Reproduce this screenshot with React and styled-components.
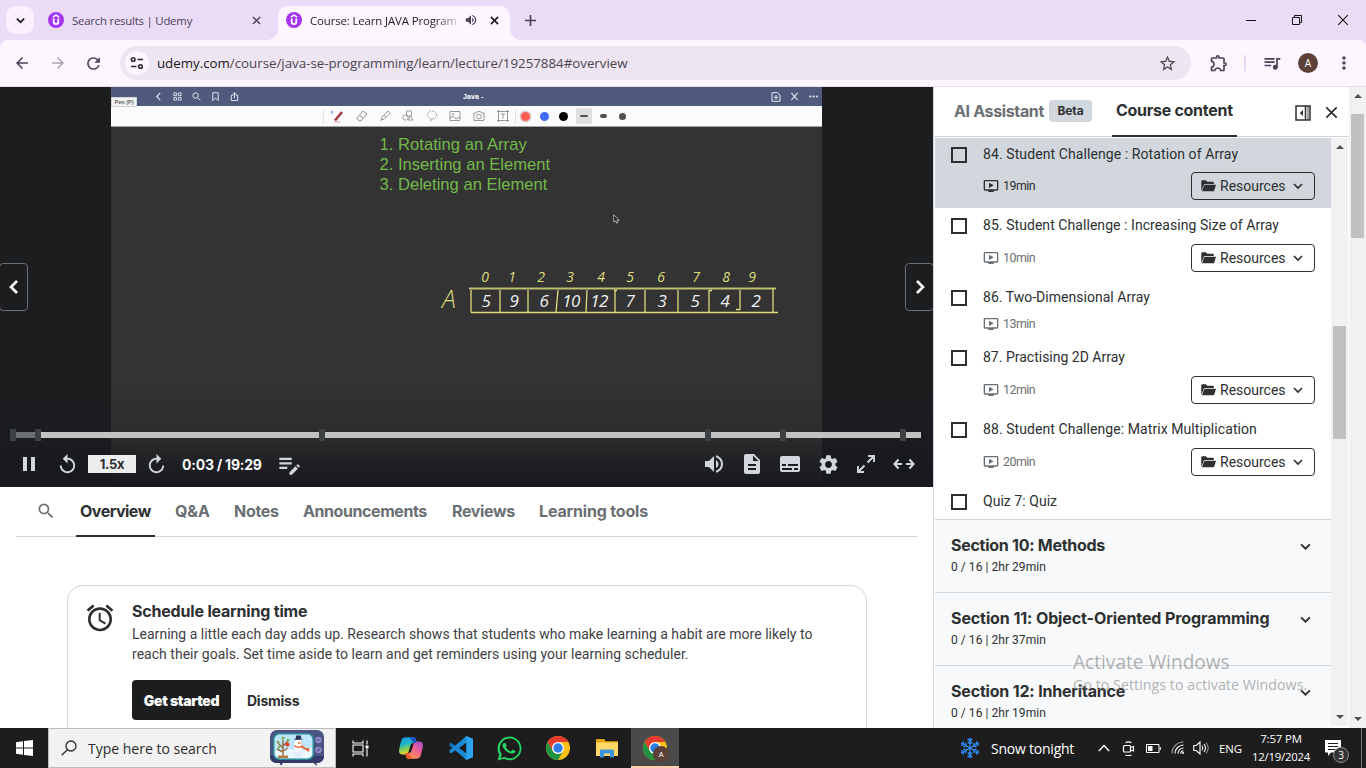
import React from "react";
import styled, { createGlobalStyle } from "styled-components";
import {
  MdAlarm, MdArrowBack, MdArrowForward, MdDescription, MdEditNote, MdMoreVert, MdOndemandVideo,
  MdOutlineExtension, MdPause, MdQueueMusic, MdRefresh, MdReplay, MdSearch, MdSettings, MdStarBorder,
  MdSubtitles, MdVolumeUp,
} from "react-icons/md";

const ui = `"Open Sans", "Liberation Sans", sans-serif`;
const brand = `Inter, "Liberation Sans", sans-serif`;
const body = `Roboto, "Liberation Sans", sans-serif`;
const ink = "#2d2f31";

const GlobalStyle = createGlobalStyle`
  * { box-sizing: border-box; }
  body { margin: 0; background: #fff; overflow: hidden; }
  svg { display: block; flex: none; }
  button { font: inherit; color: inherit; background: none; border: 0; padding: 0; }
  p, h2, h3, ul { margin: 0; padding: 0; font-size: inherit; font-weight: inherit; }
`;

const Screen = styled.div`
  position: relative;
  width: 1366px;
  height: 768px;
  display: flex;
  flex-direction: column;
  overflow: hidden;
  font-family: ${body};
  color: ${ink};
`;

/* A run of text with its own tracking */
const Run = styled.span`
  white-space: nowrap;
  letter-spacing: ${(p) => p.$ls || 0}px;
`;

/* ---------- Browser ---------- */
const TabStrip = styled.header`
  height: 40px;
  flex: none;
  display: flex;
  background: #eadcf7;
  font: 400 11.4px ${ui};
  color: #4b4158;
`;
const TabSearch = styled.button`
  width: 28px;
  height: 28px;
  margin: 6px 6px 0 6px;
  border-radius: 10px;
  background: #f9efff;
  display: grid;
  place-items: center;
  color: #1f1a24;
`;
const BrowserTab = styled.div`
  position: relative;
  height: 34px;
  margin: 6px ${(p) => (p.$active ? 0 : 6)}px 0 0;
  width: 232px;
  padding: 0 8px 6px;
  border-radius: 10px 10px 0 0;
  display: flex;
  align-items: center;
  gap: 8px;
  background: ${(p) => (p.$active ? "#fdf6ff" : "transparent")};
  color: ${(p) => (p.$active ? "#1f1a24" : "#4b4158")};
  ${(p) => p.$active && `
    &::before, &::after {
      content: ""; position: absolute; bottom: 0; width: 10px; height: 10px;
    }
    &::before { left: -10px; background: radial-gradient(circle at 0 0, transparent 9.5px, #fdf6ff 10px); }
    &::after { right: -10px; background: radial-gradient(circle at 100% 0, transparent 9.5px, #fdf6ff 10px); }
  `}
`;
const TabTitle = styled.span`
  flex: 1;
  min-width: 0;
  white-space: nowrap;
  letter-spacing: ${(p) => (p.$fade ? -0.12 : -0.22)}px;
  ${(p) => p.$fade && "margin-right: -4px; mask-image: linear-gradient(90deg, #000 84%, rgba(0, 0, 0, 0.1));"}
`;
const TabClose = styled.button`
  width: 16px;
  display: grid;
  place-items: center;
`;
const NewTab = styled.button`
  width: 40px;
  display: grid;
  place-items: center;
`;
const WindowControls = styled.div`
  margin-left: auto;
  display: flex;
  color: #111;
`;
const WindowButton = styled.button`
  width: 46px;
  display: grid;
  place-items: center;
`;
const Toolbar = styled.div`
  height: 47px;
  flex: none;
  display: flex;
  align-items: center;
  padding: 0 4px;
  background: #fdf6ff;
  border-bottom: 1px solid #e6dcee;
  border-radius: 8px 8px 0 0;
  color: #4b4158;
`;
const ToolbarBack = styled.div`
  flex: none;
  background: #eadcf7;
`;
const ToolButton = styled.button`
  width: 36px;
  height: 34px;
  display: grid;
  place-items: center;
  opacity: ${(p) => (p.$dim ? 0.45 : 1)};
`;
const AddressBar = styled.div`
  width: 1072px;
  height: 34px;
  margin: 0 10px 0 8px;
  padding: 0 14px 0 5px;
  border-radius: 17px;
  background: #ede5f1;
  display: flex;
  align-items: center;
  gap: 8px;
  font: 400 13.3px ${ui};
  color: #4c4650;
  b { font-weight: 400; color: #1b1820; }
`;
const SiteInfo = styled.span`
  width: 24px;
  height: 24px;
  border-radius: 50%;
  background: #fdf6ff;
  display: grid;
  place-items: center;
  color: #2b2630;
`;
const Url = styled.span`
  flex: 1;
  white-space: nowrap;
`;
const ToolDivider = styled.i`
  width: 2px;
  height: 16px;
  margin: 0 8px 0 7px;
  background: #e6d8f8;
`;
const Avatar = styled.span`
  width: ${(p) => p.$size}px;
  height: ${(p) => p.$size}px;
  border-radius: 50%;
  background: #5d4037;
  color: #fff;
  display: grid;
  place-items: center;
  font: 400 ${(p) => p.$size * 0.5}px ${body};
`;

/* ---------- Page ---------- */
const Page = styled.main`
  height: 641px;
  flex: none;
  display: flex;
  overflow: hidden;
`;
const Lesson = styled.section`
  width: 933px;
  flex: none;
  overflow: hidden;
`;
const Player = styled.div`
  position: relative;
  height: 400px;
  display: flex;
  justify-content: center;
  background: #1c1d1f;
`;
const Slide = styled.div`
  position: relative;
  width: 711px;
  background: #333;
  display: flex;
  flex-direction: column;
`;
const SlideHeader = styled.div`
  height: 19px;
  flex: none;
  display: flex;
  align-items: center;
  background: #505a7d;
  color: #e3e6ef;
  padding-left: 38px;
`;
const SlideIcon = styled.span`
  width: ${(p) => p.$w || 19}px;
  display: grid;
  place-items: center;
`;
const SlideTitle = styled.span`
  margin: 0 auto 0 219px;
  font: 700 7px "Liberation Sans", sans-serif;
  color: #fff;
  letter-spacing: 0.1px;
`;
const PenTip = styled.span`
  position: absolute;
  left: 0;
  top: 10px;
  width: 26px;
  height: 10px;
  background: #f2f2f2;
  border: 1px solid #d4d4d4;
  font: 700 5.5px/8px "Liberation Sans", sans-serif;
  text-align: center;
  color: #666;
`;
const SlideTools = styled.div`
  height: 21px;
  flex: none;
  display: flex;
  align-items: center;
  padding-left: 212px;
  background: #fbfbfb;
  border-bottom: 1px solid #a5a5a5;
  color: #8b8b8b;
`;
const ToolSep = styled.i`
  width: 1px;
  height: 15px;
  background: #e2e2e2;
`;
const Swatch = styled.span`
  width: 9px;
  height: 9px;
  margin: 0 5px;
  border-radius: 50%;
  background: ${(p) => p.$c};
  box-shadow: ${(p) => (p.$on ? "0 0 0 1.5px #dccfcf" : "none")};
`;
const NibBox = styled.span`
  width: 16px;
  height: 16px;
  margin: 0 1.6px;
  border-radius: 2px;
  display: grid;
  place-items: center;
  background: ${(p) => (p.$on ? "#dedee0" : "none")};
  &::after {
    content: "";
    width: ${(p) => p.$w}px;
    height: ${(p) => p.$h}px;
    border-radius: 4px;
    background: #505050;
  }
`;
const Topics = styled.div`
  padding: 8px 0 0 268.5px;
  font: 400 16.6px/20px "Liberation Sans", sans-serif;
  color: #74b84a;
  display: flex;
  flex-direction: column;
`;
const Sketch = styled.svg`
  margin: 69px 0 0 319px;
  width: 360px;
  height: 60px;
`;
const Pointer = styled.svg`
  position: absolute;
  left: 502px;
  top: 127px;
`;
const Watermark = styled.span`
  position: absolute;
  right: 3px;
  bottom: 3px;
  font: 700 6px/9px ${brand};
  color: #4b4e52;
  display: flex;
  gap: 3px;
`;
const StepButton = styled.button`
  position: absolute;
  top: 176px;
  ${(p) => p.$side}: -1px;
  width: 29px;
  height: 48px;
  border: 1px solid #6a6f73;
  border-radius: 4px;
  background: #1c1d1f;
  color: #fff;
  display: grid;
  place-items: center;
`;
const Controls = styled.div`
  position: absolute;
  inset: auto 0 0 0;
  height: 100px;
  padding: 42px 12px 0 10px;
  background: linear-gradient(180deg, rgba(22, 24, 28, 0) 0%, rgba(24, 25, 30, 0.28) 50%, rgba(24, 25, 30, 0.72) 76%, rgba(23, 24, 29, 0.95) 100%);
`;
const Track = styled.div`
  height: 12px;
  display: flex;
  align-items: center;
`;
const TrackPart = styled.i`
  flex: ${(p) => p.$w} 0 0;
  height: 6px;
  background: ${(p) => (p.$played ? "#6a6f73" : "#c2c3c1")};
`;
const Marker = styled.i`
  width: 6px;
  height: 12px;
  flex: none;
  background: #3e4143;
`;
const ControlRow = styled.div`
  height: 36px;
  margin-top: 5px;
  display: flex;
  align-items: center;
  color: #d1d7dc;
`;
const Control = styled.button`
  width: 38px;
  height: 36px;
  display: grid;
  place-items: center;
  ${(p) => p.$flip && "transform: scaleX(-1);"}
`;
const Speed = styled.button`
  width: 48px;
  height: 18px;
  margin: 0 2px;
  background: #eceef0;
  color: ${ink};
  font: 700 13px/18px ${brand};
  letter-spacing: -0.35px;
`;
const Clock = styled.span`
  width: 88px;
  margin-left: 6px;
  font: 700 14px ${brand};
  letter-spacing: -0.22px;
  white-space: nowrap;
  color: #f7f9fa;
`;
const ControlsRight = styled.div`
  margin: 0 -2px 0 auto;
  display: flex;
`;

const TabBar = styled.nav`
  height: 50px;
  margin: 0 16px;
  padding-left: 12px;
  border-bottom: 1px solid #d1d7dc;
  display: flex;
  font: 700 16px ${brand};
  color: #6a6f73;
`;
const SearchTab = styled.span`
  width: 36px;
  padding-bottom: 1px;
  display: grid;
  place-items: center;
`;
const CourseTab = styled.span`
  width: ${(p) => p.$w}px;
  height: 50px;
  margin: 0 4px 0 12px;
  padding: 0 0 3px 4px;
  display: flex;
  align-items: center;
  color: ${(p) => (p.$active ? ink : "inherit")};
  box-shadow: ${(p) => (p.$active ? `inset 0 -2px 0 ${ink}` : "none")};
`;
const ScheduleCard = styled.article`
  margin: 48px 66px 0 67px;
  height: 170px;
  border: 1px solid #d1d7dc;
  border-radius: 16px;
  padding: 15px 0 0 16px;
  display: flex;
  gap: 16px;
  > svg { margin-top: 1px; }
`;
const CardBody = styled.div`
  font: 400 14px/20px ${body};
  color: #3f4144;
  display: flex;
  flex-direction: column;
`;
const CardTitle = styled.h2`
  font: 700 16px/20px ${brand};
  margin-bottom: 3px;
  color: ${ink};
`;
const CardActions = styled.div`
  margin-top: 16px;
  display: flex;
  align-items: center;
  gap: 16px;
  font: 700 14px ${brand};
  color: ${ink};
`;
const Primary = styled.button`
  width: 99px;
  height: 40px;
  border-radius: 4px;
  background: #1c1d1f;
  color: #fff;
  font-weight: 900;
`;

/* ---------- Sidebar ---------- */
const Sidebar = styled.aside`
  width: 416px;
  flex: none;
  border-left: 1px solid #d1d7dc;
  display: flex;
  flex-direction: column;
  background: #fff;
`;
const SideHeader = styled.div`
  height: 50px;
  flex: none;
  padding-left: 20px;
  border-bottom: 1px solid #d1d7dc;
  display: flex;
  align-items: center;
  font: 700 16px ${brand};
  color: #6a6f73;
`;
const Assistant = styled.span`
  width: 95px;
  padding-bottom: 2px;
`;
const Badge = styled.span`
  width: 43px;
  height: 22px;
  margin: 0 20px 2px 0;
  border-radius: 4px;
  background: #d1d7dc;
  color: ${ink};
  font-size: 12px;
  display: grid;
  place-items: center;
`;
const ActiveSideTab = styled.span`
  width: 125px;
  height: 50px;
  padding: 0 0 3px 4px;
  margin-right: 52px;
  display: flex;
  align-items: center;
  color: ${ink};
  box-shadow: inset 0 -2px 0 ${ink};
`;
const SideIcon = styled.button`
  width: 28px;
  padding-top: 2px;
  display: grid;
  place-items: center;
  color: ${ink};
`;
const SideMain = styled.div`
  display: flex;
  flex: 1;
  min-height: 0;
  padding: 1px 0 0 1px;
`;
const Curriculum = styled.div`
  width: 396px;
  height: 590px;
  overflow: hidden;
  flex: none;
`;
const Lecture = styled.li`
  height: ${(p) => p.$h}px;
  list-style: none;
  display: flex;
  padding: ${(p) => (p.$current ? 8 : 9)}px 16px 0;
  gap: 16px;
  background: ${(p) => (p.$current ? "#d1d7dc" : "#fff")};
`;
const Checkbox = styled.i`
  width: 16px;
  height: 16px;
  margin-top: 1px;
  flex: none;
  border: 2px solid ${ink};
`;
const LectureBody = styled.div`
  flex: 1;
  display: flex;
  flex-direction: column;
  font: 400 14px/16px ${body};
`;
const LectureMeta = styled.div`
  height: ${(p) => (p.$tall ? 28 : 16)}px;
  margin-top: ${(p) => (p.$current ? 10 : 11)}px;
  display: flex;
  align-items: center;
  justify-content: space-between;
  font-size: 12.4px;
  color: ${(p) => (p.$current ? ink : "#6a6f73")};
`;
const Duration = styled.span`
  display: flex;
  align-items: center;
  gap: 4px;
`;
const Resources = styled.button`
  width: 124px;
  height: 28px;
  padding: 0 11px 0 9px;
  border: 1px solid ${ink};
  border-radius: 4px;
  display: flex;
  align-items: center;
  font: 400 14px ${body};
  color: ${ink};
  span { margin: 0 auto 0 4px; }
`;
const Section = styled.div`
  height: 73px;
  padding: 15px 20px 0 16px;
  border-top: 1px solid #d1d7dc;
  background: #f7f9fa;
  display: flex;
  justify-content: space-between;
  font: 400 12px/16px ${body};
  svg { margin-top: 6px; }
`;
const SectionTitle = styled.h3`
  font: 700 16px/20px ${brand};
  margin-bottom: 4px;
`;
const Scrollbar = styled.div`
  width: 17px;
  height: ${(p) => p.$h}px;
  flex: none;
  background: #f1f1f1;
  display: flex;
  flex-direction: column;
  align-items: center;
  justify-content: space-between;
  padding: 6px 0;
`;
const Thumb = styled.i`
  width: 13px;
  height: ${(p) => p.$h}px;
  margin: ${(p) => p.$top}px 0 auto;
  background: #c1c1c1;
`;
const Activate = styled.div`
  position: absolute;
  left: 1073px;
  top: 650px;
  display: flex;
  flex-direction: column;
  color: rgba(130, 130, 130, 0.62);
  font: 400 14.3px/20px ${ui};
  h3 { font: 400 19.1px/25px ${ui}; }
`;

/* ---------- Taskbar ---------- */
const Taskbar = styled.footer`
  height: 40px;
  flex: none;
  display: flex;
  align-items: center;
  background: #1d1d1d;
  color: #fff;
  font: 400 11.4px ${ui};
`;
const TaskSlot = styled.button`
  position: relative;
  width: ${(p) => p.$w || 49}px;
  height: 40px;
  display: grid;
  place-items: center;
  background: ${(p) => (p.$active ? "#4a4a4a" : "none")};
  box-shadow: ${(p) => (p.$active ? "inset 0 -2px 0 #ffcfae" : "none")};
`;
const ProfileDot = styled.span`
  position: absolute;
  left: 22px;
  top: 18px;
`;
const SearchBox = styled.div`
  width: 288px;
  height: 40px;
  padding: 0 11px 0 12px;
  border: 1px solid #bcbcbc;
  background: #f2f2f2;
  color: #2b2b2b;
  display: flex;
  align-items: center;
  gap: 11px;
  font-size: 14px;
  span { flex: 1; }
`;
const Tray = styled.div`
  margin-left: auto;
  display: flex;
  align-items: center;
`;
const Weather = styled.div`
  width: 132px;
  display: flex;
  align-items: center;
  gap: 10px;
  font-size: 14px;
`;
const TrayIcon = styled.span`
  width: ${(p) => p.$w || 25}px;
  display: grid;
  place-items: center;
`;
const Language = styled.span`
  width: 40px;
  padding-left: 7px;
`;
const DateTime = styled.div`
  width: 58px;
  margin-right: 2px;
  display: flex;
  flex-direction: column;
  align-items: center;
  line-height: 18px;
`;
const Notice = styled.div`
  position: relative;
  width: 50px;
  height: 40px;
  border-right: 1px solid #777;
  margin-right: 4px;
`;
const Count = styled.span`
  position: absolute;
  left: 21px;
  top: 19px;
  width: 16px;
  height: 16px;
  border: 1px solid #8b8b8b;
  border-radius: 50%;
  background: #343434;
  font: 400 10px/14px ${ui};
  text-align: center;
`;
const NoticeIcon = styled.svg`
  position: absolute;
  left: 13px;
  top: 12px;
`;

/* ---------- Drawings ---------- */
const Line = ({ s = 16, w = 1.5, vb = 24, children, ...r }) => (
  <svg width={s} height={s} viewBox={`0 0 ${vb} ${vb}`} fill="none" stroke="currentColor" strokeWidth={w} {...r}>{children}</svg>
);
const UdemyIcon = () => (
  <svg width="16" height="16" viewBox="0 0 16 16" fill="none">
    <circle cx="8" cy="8" r="8" fill="#a435f0" />
    <path d="M4.800 5.200 8 3.200l3.200 2" stroke="#fff" strokeWidth="1.500" />
    <path d="M5.700 6.600v3.200a2.300 2.300 0 0 0 4.600 0V6.600" stroke="#fff" strokeWidth="1.800" />
  </svg>
);
const Cross = ({ s = 9, w = 1.7 }) => <Line s={s} vb={10} w={w}><path d="M1 1l8 8M9 1 1 9" /></Line>;
const Chevron = ({ s = 10, w = 1.6 }) => <Line s={s} vb={10} w={w}><path d="M1 3l4 4 4-4" /></Line>;
const Arrow = ({ up }) => (
  <svg width="8" height="5" viewBox="0 0 8 5"><path d={up ? "M0 5 4 1l4 4z" : "M0 0l4 4 4-4z"} fill="#505050" /></svg>
);
const OpenFolder = () => (
  <svg width="15" height="12" viewBox="0 0 15 12">
    <path d="M.3 11V1.200C.3.700.700.300 1.200.300h3.600l1.400 1.500h5.600c.6 0 1 .4 1 1V4H3.200z" fill={ink} />
    <path d="M3.400 4.700H15l-2 6.600H1z" fill={ink} />
  </svg>
);
const ChromeLogo = () => (
  <svg width="24" height="24" viewBox="0 0 24 24">
    <circle cx="12" cy="12" r="12" fill="#fbc116" />
    <path d="M12 12 6.800 15 1.600 6A12 12 0 0 1 22.400 6H12z" fill="#e33b2e" />
    <path d="M1.600 6 6.800 15 12 18l5.200-3L12 24A12 12 0 0 1 1.600 6z" fill="#229342" />
    <circle cx="12" cy="12" r="6" fill="#fff" /><circle cx="12" cy="12" r="4.700" fill="#2f7de9" />
  </svg>
);
const Copilot = () => (
  <svg width="26" height="24" viewBox="0 0 26 24">
    <defs>
      <linearGradient id="cpa" x1="0" y1="0" x2="0.3" y2="1"><stop stopColor="#1a8fe8" /><stop offset=".45" stopColor="#1fb5c9" /><stop offset=".75" stopColor="#8fd04f" /><stop offset="1" stopColor="#f6cf2a" /></linearGradient>
      <linearGradient id="cpb" x1="1" y1="0" x2="0.3" y2="1"><stop stopColor="#a04bd8" /><stop offset=".5" stopColor="#f06292" /><stop offset="1" stopColor="#fb9a4b" /></linearGradient>
    </defs>
    <path d="M15 1.200c2 0 2.600 1.200 3.200 3.400L19 7h-3.600c-1.800 0-2.600 1-3.200 3L10.400 16.200C9.800 18 9 18.500 7 18.500H4.500C1.200 18.500.600 15.500 1.300 12.500l1.700-7C3.800 2.500 5 1.200 8 1.200z" fill="url(#cpa)" />
    <path d="M11 22.800c-2 0-2.600-1.200-3.200-3.400L7 17h3.600c1.800 0 2.600-1 3.200-3l1.800-6.200c.6-1.800 1.400-2.300 3.400-2.300h2.500c3.300 0 3.900 3 3.200 6l-1.700 7c-.8 3-2 4.300-5 4.300z" fill="url(#cpb)" />
    <path d="M11.500 1.200H15c2 0 2.600 1.200 3.200 3.400L19 7h-3.600z" fill="#1c54c4" />
    <path d="M14.500 22.800H11c-2 0-2.600-1.200-3.200-3.400L7 17h3.600z" fill="#f3572f" />
  </svg>
);
const VsCode = () => (
  <svg width="24" height="24" viewBox="0 0 24 24">
    <path d="M17.500 0 6.500 10 2.200 6.800.4 7.700v1.700L17.500 24z" fill="#0b73bd" />
    <path d="M17.500 24 6.500 14l-4.300 3.200-1.800-.9v-1.700L17.500 0z" fill="#1a8ad4" />
    <path d="M17.500 0 24 2.800v18.400L17.500 24l-.4-.3V.3z" fill="#2fa3f0" />
    <path d="M17.200 6.800 10 12l7.200 5.200z" fill="#1d1d1d" />
  </svg>
);
const WhatsApp = () => (
  <svg width="25" height="25" viewBox="0 0 24 24" fill="#25d366">
    <path d="M12 .5A11.400 11.400 0 0 0 2.200 17.700L.600 23.500l6-1.600A11.400 11.400 0 1 0 12 .5zm0 20.900a9.500 9.500 0 0 1-4.800-1.300l-3.600.9 1-3.400A9.500 9.500 0 1 1 12 21.400z" />
    <path d="M17.300 14.200c-.3-.1-1.700-.9-2-.9-.3-.1-.5-.1-.7.100l-.9 1.200c-.2.200-.4.200-.7.100-1.900-.9-3.100-1.700-4.300-3.700-.2-.4.100-.4.500-1.300.1-.200 0-.4 0-.5l-.9-2.100c-.2-.6-.5-.5-.7-.5h-.6c-.2 0-.5.100-.8.400-1.100 1.100-1.200 2.400-.3 4 1.900 3 3.600 4.300 6 5.200 2.200.8 2.800.7 3.800.4.700-.2 1.700-.8 1.900-1.500.2-.6.200-1.200.1-1.300z" />
  </svg>
);
const Explorer = () => (
  <svg width="22" height="19" viewBox="0 0 22 19">
    <path d="M0 1.200C0 .5.500 0 1.200 0H8l2 2.300h12V6H0z" fill="#e5a50a" />
    <path d="M0 3.500h22V17H0z" fill="#ffd868" />
    <path d="M4 18.500V11.800c0-.7.500-1.200 1.200-1.200h11.600c.7 0 1.200.5 1.200 1.200v6.700h-4v-4H8v4z" fill="#3a93dc" />
  </svg>
);
const HolidayTv = () => (
  <svg width="54" height="36" viewBox="0 0 54 36">
    <path d="M9 31h5l-3 5zM41 31h5l1 5z" fill="#353b6b" />
    <rect width="54" height="33" rx="7" fill="#4b5382" /><path d="M0 26c0 5 3 7 7 7h40c4 0 7-3 7-7z" fill="#333a68" />
    <rect x="3" y="3" width="41" height="27" rx="6" fill="#2a8b93" />
    <rect x="4.500" y="4.500" width="38" height="24" rx="5" fill="#bfe6fb" />
    <path d="M5 21q10-4 18-1t19-2v5q0 5-5 5H10q-5 0-5-5z" fill="#eaf8ff" />
    <path d="M13 26V10m0 8-5-5m5 3 5-5m-5 10 5-3m-5 4-6-3" stroke="#94683f" strokeWidth="1.400" fill="none" />
    <g fill="#7db05a"><circle cx="8" cy="12" r="1.500" /><circle cx="13" cy="8" r="1.600" /><circle cx="18" cy="10" r="1.500" /><circle cx="9" cy="17" r="1.300" /></g>
    <circle cx="17.500" cy="14.500" r="2.100" fill="#e8402f" /><path d="M8 25.500h10v2.500H8z" fill="#b57a3d" />
    <circle cx="28" cy="23.500" r="4.800" fill="#e6ebff" /><circle cx="28" cy="17.500" r="4" fill="#f8faff" /><circle cx="28" cy="12.500" r="3.300" fill="#fff" />
    <path d="m25.500 9 .7-3.500h4.500L31.500 9l2 .5-10 .5z" fill="#2c3157" /><path d="m28 12 4.500 1-4.500 1.100z" fill="#ee7a27" />
    <path d="M24.500 15q4 3 8 0 2 3.500 7 3.500l-1 3.500q-3-3-7-4.500-4 .8-7-.5z" fill="#f0612c" />
    <circle cx="48.500" cy="10" r="3.300" fill="#9089c9" /><circle cx="48.500" cy="20" r="3.300" fill="#9089c9" />
    <path d="M46.500 10h4M47 21.500l3-3" stroke="#565295" strokeWidth="1.200" />
  </svg>
);
const Snowflake = () => (
  <svg width="22" height="22" viewBox="0 0 22 22" fill="none" stroke="#2f8df0" strokeWidth="1.300">
    {[0, 60, 120, 180, 240, 300].map((a) => (
      <path key={a} transform={`rotate(${a} 11 11)`} d="M11 11V.8M8.700 1.800 11 4.100l2.300-2.300M8.700 4.700 11 7l2.300-2.300" />
    ))}
  </svg>
);

const cellEdges = [471, 500, 528, 557, 586, 615, 645, 678, 709, 740, 773];
const indexes = [[485, 0], [512, 1], [541, 2], [570, 3], [601, 4], [630, 5], [661, 6], [696, 7], [726, 8], [752, 9]];
const values = [[486, 5], [514, 9], [544, 6], [571, 10], [599, 12], [630, 7], [662, 3], [695, 5], [725, 4], [756, 2]];

const ArraySketch = () => (
  <Sketch viewBox="430 264 360 60" fill="none" stroke="#dede7c" strokeWidth="1.300">
    <path d="M469 288.500H776" strokeWidth="1.800" stroke="#bdbf72" />
    <path d="M471 312.500H778" />
    {cellEdges.map((x, i) => (
      <path key={x} d={`M${x + (i === 3 || i === 4 ? 1 : 0)} ${i === 10 ? 288 : 290}L${x - (i === 3 ? 1 : 0)} ${i === 9 ? 309.5 : 312.5}${i === 9 ? "h-4" : ""}`} />
    ))}
    <path d="M614 290.500h3M709 290.500h3" />
    <g stroke="none" fontFamily="Open Sans, sans-serif" fontStyle="italic" textAnchor="middle">
      <g fill="#dede7c" fontSize="14">
        {indexes.map(([x, n]) => <text key={n} x={x} y="282">{n}</text>)}
        <text x="449" y="308" fontSize="25" fontWeight="300">A</text>
      </g>
      <g fill="#efefef" fontSize="17" letterSpacing="-0.500">
        {values.map(([x, n], i) => <text key={i} x={x} y="307">{n}</text>)}
      </g>
    </g>
  </Sketch>
);

const lectures = [
  { t: "84. Student Challenge : Rotation of Array", d: "19min", h: 70, res: true, current: true, ls: 0.09 },
  { t: "85. Student Challenge : Increasing Size of Array", d: "10min", h: 72, res: true, ls: 0.06 },
  { t: "86. Two-Dimensional Array", d: "13min", h: 60, ls: 0.02 },
  { t: "87. Practising 2D Array", d: "12min", h: 72, res: true },
  { t: "88. Student Challenge: Matrix Multiplication", d: "20min", h: 72, res: true, ls: 0.07 },
  { t: "Quiz 7: Quiz", h: 35, ls: 0.04 },
];
const sections = [
  ["Section 10: Methods", "0 / 16 | 2hr 29min", -0.27],
  ["Section 11: Object-Oriented Programming", "0 / 16 | 2hr 37min", -0.1],
  ["Section 12: Inheritance", "0 / 16 | 2hr 19min", -0.18],
];
const courseTabs = [
  ["Overview", 79, -0.5, true], ["Q&A", 43, -0.1], ["Notes", 53, -0.3], ["Announcements", 133, -0.42],
  ["Reviews", 71, -0.37], ["Learning tools", 120, -0.17],
];

function Browser() {
  return (
    <>
      <TabStrip>
        <TabSearch><Chevron s={9} w={2} /></TabSearch>
        <BrowserTab>
          <UdemyIcon /><TabTitle>Search results | Udemy</TabTitle>
          <TabClose><Cross w={1.5} /></TabClose>
        </BrowserTab>
        <BrowserTab $active>
          <UdemyIcon /><TabTitle $fade>Course: Learn JAVA Program</TabTitle>
          <MdVolumeUp size={14} color="#4b4158" />
          <TabClose><Cross w={1.9} /></TabClose>
        </BrowserTab>
        <NewTab><Line s={11} vb={10} w={1.5}><path d="M5 0v10M0 5h10" /></Line></NewTab>
        <WindowControls>
          <WindowButton><Line s={10} vb={10} w={1}><path d="M0 5.500h10" /></Line></WindowButton>
          <WindowButton><Line s={10} vb={10} w={1}><path d="M.5 2.500h7v7h-7zM2.500 2.500v-2h7v7h-2" /></Line></WindowButton>
          <WindowButton><Cross s={12} w={0.9} /></WindowButton>
        </WindowControls>
      </TabStrip>
      <ToolbarBack>
        <Toolbar>
          <ToolButton><MdArrowBack size={18} /></ToolButton>
          <ToolButton $dim><MdArrowForward size={18} /></ToolButton>
          <ToolButton><MdRefresh size={19} /></ToolButton>
          <AddressBar>
            <SiteInfo>
              <Line s={14} vb={14} w={1.6}><circle cx="3.200" cy="3.500" r="1.800" /><path d="M7.500 3.500H13M1 10.500h5.500" /><circle cx="10.500" cy="10.500" r="1.800" /></Line>
            </SiteInfo>
            <Url><b>udemy.com</b>/course/java-se-programming/learn/lecture/19257884#overview</Url>
            <MdStarBorder size={19} />
          </AddressBar>
          <ToolButton><MdOutlineExtension size={20} /></ToolButton>
          <ToolDivider />
          <ToolButton><MdQueueMusic size={20} /></ToolButton>
          <ToolButton><Avatar $size={20}>A</Avatar></ToolButton>
          <ToolButton><MdMoreVert size={20} /></ToolButton>
        </Toolbar>
      </ToolbarBack>
    </>
  );
}

function Whiteboard() {
  return (
    <Slide>
      <SlideHeader>
        <SlideIcon><Line s={9} vb={10} w={1.2}><path d="M7 1 3 5l4 4" /></Line></SlideIcon>
        <SlideIcon><Line s={9} vb={10} w={1}><path d="M1 1h3v3H1zM6 1h3v3H6zM1 6h3v3H1zM6 6h3v3H6z" /></Line></SlideIcon>
        <SlideIcon><Line s={9} vb={10} w={1.1}><circle cx="4" cy="4" r="3" /><path d="m6.300 6.300 3 3" /></Line></SlideIcon>
        <SlideIcon><Line s={9} vb={10} w={1.1}><path d="M2 .8h6v8.700L5 6.500l-3 3z" /></Line></SlideIcon>
        <SlideIcon><Line s={9} vb={10} w={1.1}><path d="M3.500 3.500H1.500v6h7v-6h-2M5 7V.8M3 2.700 5 .8l2 1.900" /></Line></SlideIcon>
        <SlideTitle>Java&nbsp;-</SlideTitle>
        <SlideIcon><Line s={10} vb={10} w={1}><path d="M1 .7h5.500L9 3v6.300H1zM5 3v4.500M2.800 5.300h4.500" /></Line></SlideIcon>
        <SlideIcon><Line s={9} vb={10} w={1.2}><path d="m1.500 1 7 8M8.500 1l-7 8" /></Line></SlideIcon>
        <SlideIcon $w={18}><svg width="9" height="3" viewBox="0 0 9 3" fill="currentColor"><circle cx="1.200" cy="1.500" r="1.100" /><circle cx="4.500" cy="1.500" r="1.100" /><circle cx="7.800" cy="1.500" r="1.100" /></svg></SlideIcon>
      </SlideHeader>
      <PenTip>Pen (P)</PenTip>
      <SlideTools>
        <ToolSep />
        <SlideIcon $w={26}><Line s={13} vb={13} w={1.1}><path d="M1 .8v3" stroke="#4b75e8" /><path d="m4 10.500 7-8.500" stroke="#a33c3c" strokeWidth="2.600" /><path d="M3 12h6" stroke="#e07070" strokeWidth=".7" /></Line></SlideIcon>
        <SlideIcon $w={23}><Line s={12} vb={12} w={0.9}><path d="m1 8 6-7 4 3-6 7H3zM3.500 5.300l4 3" /></Line></SlideIcon>
        <SlideIcon $w={23.5}><Line s={12} vb={12} w={0.9}><path d="m3 7 6-6 2.200 2.200-6 6L2.500 9.700zM2.500 9.700 1 11.200M5 5.200 7 7.200" /></Line></SlideIcon>
        <SlideIcon $w={23.5}><Line s={12} vb={12} w={0.8}><path d="M4.500 1h5v5h-5z" /><circle cx="3.500" cy="7.500" r="2.700" /><path d="m6 10 2.500-4L11 10z" /></Line></SlideIcon>
        <SlideIcon $w={23.5}><Line s={12} vb={12} w={0.9}><ellipse cx="6" cy="5" rx="4.700" ry="4" strokeDasharray="1.500 1" /><path d="M5 9v2.300" /></Line></SlideIcon>
        <SlideIcon $w={23.5}><Line s={12} vb={12} w={0.9}><path d="M1 1.500h10v9H1zM1 8l3-2 3 3 4-2" /><circle cx="4" cy="4" r=".6" /></Line></SlideIcon>
        <SlideIcon $w={23.5}><Line s={12} vb={12} w={0.9}><path d="M1 3h2.500l1-1.500h3l1 1.500H11v7.500H1z" /><circle cx="6" cy="6.500" r="2.300" /></Line></SlideIcon>
        <SlideIcon $w={24.5}><Line s={12} vb={12} w={0.9}><path d="M1.500 0v12M10.500 0v12M0 1.500h12M0 10.500h12M4 4h4M6 4v4.500" /></Line></SlideIcon>
        <ToolSep />
        <Swatch $c="#fa5f56" $on /><Swatch $c="#3f6bf6" /><Swatch $c="#000" />
        <ToolGap />
        <NibBox $on $w={8} $h={2} /><NibBox $w={7} $h={4} /><NibBox $w={7} $h={7} />
      </SlideTools>
      <Topics>
        <Run $ls={0.03}>1. Rotating an Array</Run>
        <Run>2. Inserting an Element</Run>
        <Run>3. Deleting an Element</Run>
      </Topics>
      <ArraySketch />
      <Pointer width="7" height="10" viewBox="0 0 7 10"><path d="M.7.700v7.500L2.500 6.700l1.200 2.600 1.200-.6L3.800 6.200h2.500z" fill="#222" stroke="#ddd" strokeWidth=".7" /></Pointer>
      <Watermark><i>u</i>Udemy</Watermark>
    </Slide>
  );
}
const ToolGap = styled.i`
  width: 1.5px;
`;

function VideoPlayer() {
  const parts = [19, 278, 380, 69, 114, 15];
  return (
    <Player>
      <Whiteboard />
      <Controls>
        <Track>
          {parts.map((w, i) => <React.Fragment key={w}><Marker /><TrackPart $w={w} $played={i === 0} /></React.Fragment>)}
        </Track>
        <ControlRow>
          <Control><MdPause size={24} /></Control>
          <Control><MdReplay size={23} /></Control>
          <Speed>1.5x</Speed>
          <Control $flip><MdReplay size={23} /></Control>
          <Clock>0:03 / 19:29</Clock>
          <Control><MdEditNote size={27} /></Control>
          <ControlsRight>
            <Control><MdVolumeUp size={24} /></Control>
            <Control><MdDescription size={24} /></Control>
            <Control><MdSubtitles size={24} /></Control>
            <Control><MdSettings size={23} /></Control>
            <Control><Line s={20} vb={20} w={1.9}><path d="M12 2h6v6M18 2l-6.500 6.500M8 18H2v-6M2 18l6.500-6.500" /></Line></Control>
            <Control><Line s={22} vb={22} w={2.1}><path d="M5.500 6.500 1.500 11l4 4.500M2 11h7M16.500 6.500l4 4.500-4 4.500M20 11h-7" /></Line></Control>
          </ControlsRight>
        </ControlRow>
      </Controls>
      <StepButton $side="left"><Line s={16} vb={16} w={2.6}><path d="m11 2-6 6 6 6" /></Line></StepButton>
      <StepButton $side="right"><Line s={16} vb={16} w={2.6}><path d="m5 2 6 6-6 6" /></Line></StepButton>
    </Player>
  );
}

function CourseSidebar() {
  return (
    <Sidebar>
      <SideHeader>
        <Assistant><Run $ls={-0.36}>AI Assistant</Run></Assistant>
        <Badge><Run $ls={-0.1}>Beta</Run></Badge>
        <ActiveSideTab><Run $ls={-0.28}>Course content</Run></ActiveSideTab>
        <SideIcon><Line s={16} vb={16} w={1.5}><path d="M1 1h14v14H1zM10.500 1v14" /><path d="M13 1v14" strokeWidth=".9" /><path d="M8 5v6L4.800 8z" fill="currentColor" stroke="none" /></Line></SideIcon>
        <SideIcon><Cross s={13} w={1.3} /></SideIcon>
      </SideHeader>
      <SideMain>
        <Curriculum>
          <ul>
            {lectures.map((l) => (
              <Lecture key={l.t} $h={l.h} $current={l.current}>
                <Checkbox />
                <LectureBody>
                  <Run $ls={l.ls}>{l.t}</Run>
                  {l.d && (
                    <LectureMeta $tall={l.res} $current={l.current}>
                      <Duration><MdOndemandVideo size={16} /><Run $ls={-0.5}>{l.d}</Run></Duration>
                      {l.res && <Resources><OpenFolder /><span>Resources</span><Chevron s={10} w={1.7} /></Resources>}
                    </LectureMeta>
                  )}
                </LectureBody>
              </Lecture>
            ))}
          </ul>
          {sections.map(([t, d, ls]) => (
            <Section key={t}>
              <div><SectionTitle><Run $ls={ls}>{t}</Run></SectionTitle><Run $ls={0.05}>{d}</Run></div>
              <Chevron s={11} w={1.7} />
            </Section>
          ))}
        </Curriculum>
        <Scrollbar $h={588}><Arrow up /><Thumb $top={177} $h={113} /><Arrow /></Scrollbar>
      </SideMain>
    </Sidebar>
  );
}

function WindowsTaskbar() {
  return (
    <Taskbar>
      <TaskSlot $w={48}><svg width="17" height="16" viewBox="0 0 17 16" fill="#fff"><path d="M0 2.300 7 1.300v6.200H0zM8 1.100 17 0v7.500H8zM0 8.500h7v6.200l-7-1zM8 8.500h9V16l-9-1.100z" /></svg></TaskSlot>
      <SearchBox>
        <Line s={16} vb={16} w={1.3}><circle cx="10" cy="6" r="5" /><path d="M6.300 9.700 .7 15.300" /></Line>
        <span>Type here to search</span>
        <HolidayTv />
      </SearchBox>
      <TaskSlot $w={49}><Line s={17} vb={17} w={1.1}><path d="M1 .5v2.500h10V.5M1 16.500V14h10v2.500M1 5h10v7H1zM15 .5v4M15 9v7.500" /><path d="M13.500 5.500h3v3h-3z" fill="#fff" stroke="none" /></Line></TaskSlot>
      <TaskSlot $w={51}><Copilot /></TaskSlot>
      <TaskSlot><VsCode /></TaskSlot>
      <TaskSlot><WhatsApp /></TaskSlot>
      <TaskSlot $w={48}><ChromeLogo /></TaskSlot>
      <TaskSlot><Explorer /></TaskSlot>
      <TaskSlot $w={48} $active><ChromeLogo /><ProfileDot><Avatar $size={16}>A</Avatar></ProfileDot></TaskSlot>
      <Tray>
        <Weather><Snowflake /><Run $ls={-0.23}>Snow tonight</Run></Weather>
        <TrayIcon><Line s={12} vb={12} w={1.3}><path d="m.8 9 5.200-5.500L11.200 9" /></Line></TrayIcon>
        <TrayIcon><Line s={15} vb={15} w={1.2}><rect x="2.500" y="4.500" width="7" height="6.500" rx="1" /><path d="m9.500 6.500 3-1v4.500l-3-1M4.500 1.500q3-1.200 6 0M4.500 14q3 1.200 6 0" /></Line></TrayIcon>
        <TrayIcon><svg width="15" height="9" viewBox="0 0 15 9" fill="none" stroke="#fff"><path d="M.5.5h12.500v8H.5zM14.300 3v3" /><path d="M2 2h4.500v5H2z" fill="#fff" stroke="none" /></svg></TrayIcon>
        <TrayIcon $w={24}><Line s={14} vb={14} w={1.1}><path d="M1 12.500A11.500 11.500 0 0 1 12.500 1" opacity=".6" /><path d="M4 12.500A8.500 8.500 0 0 1 12.500 4M7 12.500A5.500 5.500 0 0 1 12.500 7M9.700 12.500A2.800 2.800 0 0 1 12.500 9.700" /><circle cx="12" cy="12" r="1" fill="#fff" stroke="none" /></Line></TrayIcon>
        <TrayIcon $w={22}><Line s={16} vb={16} w={1.1}><path d="M.8 5.500h2.500L7 2v12l-3.700-3.500H.8z" /><path d="M9 5.800q1.600 2.200 0 4.400M11 4q3 4 0 8" /><path d="M13 2.500q4.500 5.500 0 11" opacity=".5" /></Line></TrayIcon>
        <Language><Run $ls={-0.1}>ENG</Run></Language>
        <DateTime><Run $ls={-0.15}>7:57 PM</Run><Run $ls={-0.25}>12/19/2024</Run></DateTime>
        <Notice>
          <NoticeIcon width="16" height="16" viewBox="0 0 16 16"><path d="M0 0h16v12.500H6L3 16v-3.500H0z" fill="#fff" /><path d="M3 3.500h10M3 6.500h10M3 9.500h7" stroke="#1d1d1d" /></NoticeIcon>
          <Count>3</Count>
        </Notice>
      </Tray>
    </Taskbar>
  );
}

export default function App() {
  return (
    <Screen>
      <GlobalStyle />
      <Browser />
      <Page>
        <Lesson>
          <VideoPlayer />
          <TabBar>
            <SearchTab><MdSearch size={20} /></SearchTab>
            {courseTabs.map(([t, w, ls, on]) => <CourseTab key={t} $w={w} $active={on}><Run $ls={ls}>{t}</Run></CourseTab>)}
          </TabBar>
          <ScheduleCard>
            <MdAlarm size={32} />
            <CardBody>
              <CardTitle><Run $ls={-0.19}>Schedule learning time</Run></CardTitle>
              <Run $ls={0.015}>Learning a little each day adds up. Research shows that students who make learning a habit are more likely to</Run>
              <Run $ls={0.025}>reach their goals. Set time aside to learn and get reminders using your learning scheduler.</Run>
              <CardActions>
                <Primary><Run $ls={-0.32}>Get started</Run></Primary>
                <Run $ls={-0.25}>Dismiss</Run>
              </CardActions>
            </CardBody>
          </ScheduleCard>
        </Lesson>
        <CourseSidebar />
        <Scrollbar $h={641}><Arrow up /><Thumb $top={16} $h={124} /><Arrow /></Scrollbar>
      </Page>
      <WindowsTaskbar />
      <Activate>
        <h3>Activate Windows</h3>
        <span>Go to Settings to activate Windows.</span>
      </Activate>
    </Screen>
  );
}
